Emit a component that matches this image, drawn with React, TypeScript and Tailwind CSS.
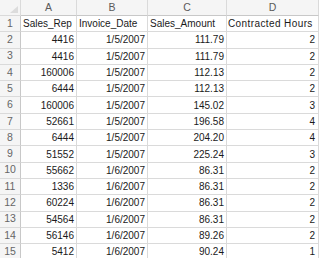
const rows: [number, string, string, number][] = [
  [4416, "1/5/2007", "111.79", 2],
  [4416, "1/5/2007", "111.79", 2],
  [160006, "1/5/2007", "112.13", 2],
  [6444, "1/5/2007", "112.13", 2],
  [160006, "1/5/2007", "145.02", 3],
  [52661, "1/5/2007", "196.58", 4],
  [6444, "1/5/2007", "204.20", 4],
  [51552, "1/5/2007", "225.24", 3],
  [55662, "1/6/2007", "86.31", 2],
  [1336, "1/6/2007", "86.31", 2],
  [60224, "1/6/2007", "86.31", 2],
  [54564, "1/6/2007", "86.31", 2],
  [56146, "1/6/2007", "89.26", 2],
  [5412, "1/6/2007", "90.24", 1],
];

const cell = "border-r border-b border-[#dadada] flex items-center overflow-hidden whitespace-nowrap";
const colHead = `${cell} justify-center bg-[#f5f5f5] text-[#5a5a5a] text-[10.5px] border-b-[#c8c8c8]`;
const rowHead = `${cell} justify-center bg-[#f5f5f5] text-[#666] text-[10.5px] border-r-[#c8c8c8]`;

export default function App() {
  return (
    <div className="w-[320px] h-[258px] overflow-hidden bg-white font-['Liberation_Sans',Arial,sans-serif] text-[10px] text-[#1a1a1a]">
      <div className="grid grid-cols-[21px_56px_71px_79px_92px] grid-rows-[16px_repeat(15,16.3px)]">
        {/* corner */}
        <div className={`${cell} relative bg-[#f5f5f5] border-[#c8c8c8]`}>
          <svg className="absolute right-[2px] bottom-[2px]" width="8" height="7" viewBox="0 0 8 7">
            <polygon points="8,0 8,7 0,7" fill="#dcdcdc" />
          </svg>
        </div>
        {["A", "B", "C", "D"].map((c) => (
          <div key={c} className={colHead}>{c}</div>
        ))}

        <div className={rowHead}>1</div>
        <div className={`${cell} pl-[2px]`}>Sales_Rep</div>
        <div className={`${cell} pl-[2px]`}>Invoice_Date</div>
        <div className={`${cell} pl-[2px]`}>Sales_Amount</div>
        <div className={`${cell} pl-[1px] tracking-[0.4px]`}>Contracted Hours</div>

        {rows.map((r, i) => (
          <div key={i} className="contents">
            <div className={rowHead}>{i + 2}</div>
            <div className={`${cell} justify-end pr-[2px]`}>{r[0]}</div>
            <div className={`${cell} justify-end pr-[2px]`}>{r[1]}</div>
            <div className={`${cell} justify-end pr-[2px]`}>{r[2]}</div>
            <div className={`${cell} justify-end pr-[3px]`}>{r[3]}</div>
          </div>
        ))}
      </div>
    </div>
  );
}
